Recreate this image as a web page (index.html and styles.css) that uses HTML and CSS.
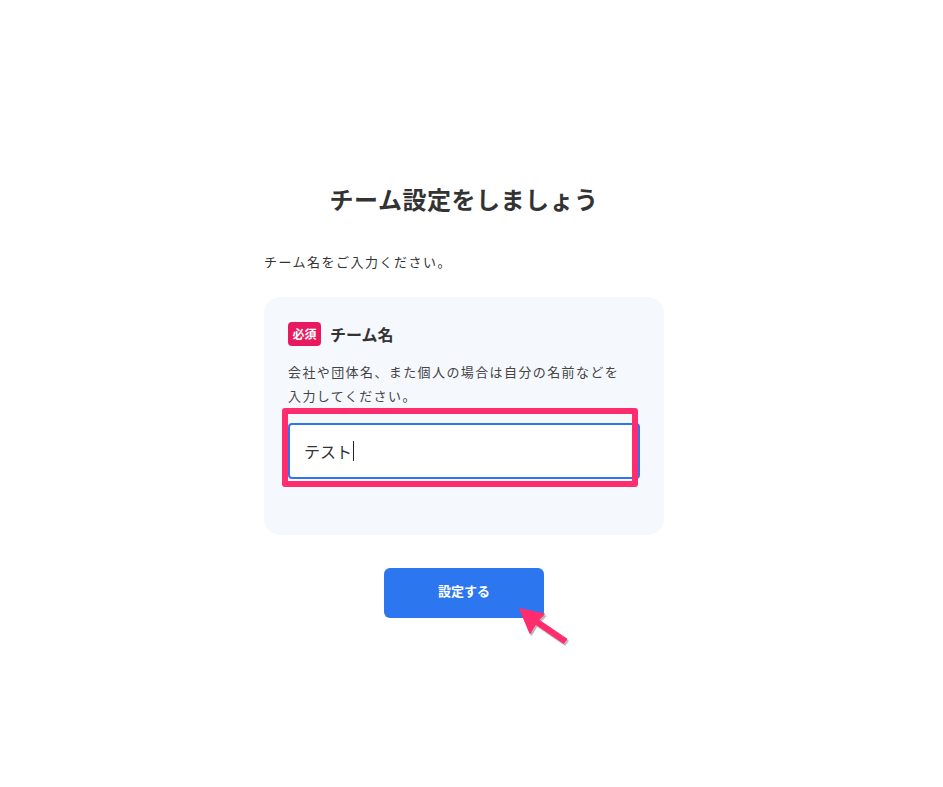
FILE: index.html
```html
<!DOCTYPE html>
<html lang="ja">

<head>
    <meta charset="utf-8">
    <title>チーム設定</title>
    <link rel="stylesheet" href="styles.css">
</head>

<body>
    <div class="page">
        <div class="setup">
            <h1 class="title">チーム設定をしましょう</h1>
            <p class="lead">チーム名をご入力ください。</p>

            <div class="card">
                <div class="label-row">
                    <span class="badge">必須</span>
                    <span class="label">チーム名</span>
                </div>
                <p class="hint">会社や団体名、また個人の場合は自分の名前などを<br>入力してください。</p>
                <div class="field">
                    <div class="input">テスト<span class="caret"></span></div>
                    <!-- annotation frame -->
                    <div class="mark"></div>
                </div>
            </div>

            <div class="actions">
                <button class="submit" type="button">設定する</button>
                <div class="arrow">
                    <svg width="70" height="50" viewBox="0 0 70 50">
                        <polygon points="16.5,11 40.5,16 35,22 63,41 60,45 32,26 26.5,35" fill="rgba(0,0,0,0.18)" stroke="rgba(0,0,0,0.18)" stroke-width="2" stroke-linejoin="round" />
                        <polygon points="15,9 39,14 33.5,20 61.5,39 58.5,43 30.5,24 25,33" fill="#ff2d6e" stroke="#ff2d6e" stroke-width="1.5" stroke-linejoin="round" />
                    </svg>
                </div>
            </div>
        </div>
    </div>
</body>

</html>
```

FILE: styles.css
```css
body {
    margin: 0;
    padding: 0;
    background-color: #fff;
    color: #333;
    font-family: "Noto Sans CJK JP", "Noto Sans", sans-serif;
}

.page {
    width: 928px;
    display: flex;
    justify-content: center;
}

.setup {
    width: 400px;
    padding-top: 181px;
}

.title {
    margin: 0;
    font-size: 24px;
    line-height: 36px;
    font-weight: bold;
    text-align: center;
    letter-spacing: 0.5px;
}

.lead {
    margin: 35px 0 0;
    font-size: 13px;
    line-height: 20px;
    letter-spacing: 1.5px;
}

.card {
    margin-top: 25px;
    padding: 25px 24px 56px;
    background-color: #f5f8fd;
    border-radius: 16px;
}

.label-row {
    display: flex;
    align-items: center;
    gap: 9px;
    height: 24px;
}

.badge {
    width: 33px;
    height: 24px;
    border-radius: 4px;
    background-color: #e8195e;
    color: #fff;
    font-size: 12px;
    font-weight: bold;
    line-height: 24px;
    text-align: center;
}

.label {
    font-size: 16px;
    font-weight: bold;
}

.hint {
    margin: 14px 0 0;
    font-size: 13px;
    line-height: 24px;
    color: #444;
    letter-spacing: 1.4px;
}

.field {
    position: relative;
    margin-top: 15px;
}

.input {
    box-sizing: border-box;
    height: 56px;
    padding: 0 14px;
    display: flex;
    align-items: center;
    background-color: #fff;
    border: 2px solid #2c77ef;
    border-radius: 4px;
    font-size: 16px;
    color: #333;
}

.caret {
    width: 1px;
    height: 20px;
    margin-left: 1px;
    background-color: #222;
}

.mark {
    position: absolute;
    left: -6px;
    top: -15px;
    width: 356px;
    height: 79px;
    box-sizing: border-box;
    border: 6px solid #ff2d6e;
    border-radius: 3px;
}

.actions {
    position: relative;
    display: flex;
    justify-content: center;
    margin-top: 33px;
    padding-bottom: 40px;
}

.submit {
    width: 160px;
    height: 50px;
    padding: 0 0 5px;
    border: none;
    border-radius: 6px;
    background-color: #2c77ef;
    color: #fff;
    font-family: inherit;
    font-size: 13px;
    font-weight: bold;
    cursor: pointer;
}

.arrow {
    position: absolute;
    left: 241px;
    top: 32px;
    width: 70px;
    height: 50px;
}

.arrow svg {
    display: block;
    overflow: visible;
}
```
